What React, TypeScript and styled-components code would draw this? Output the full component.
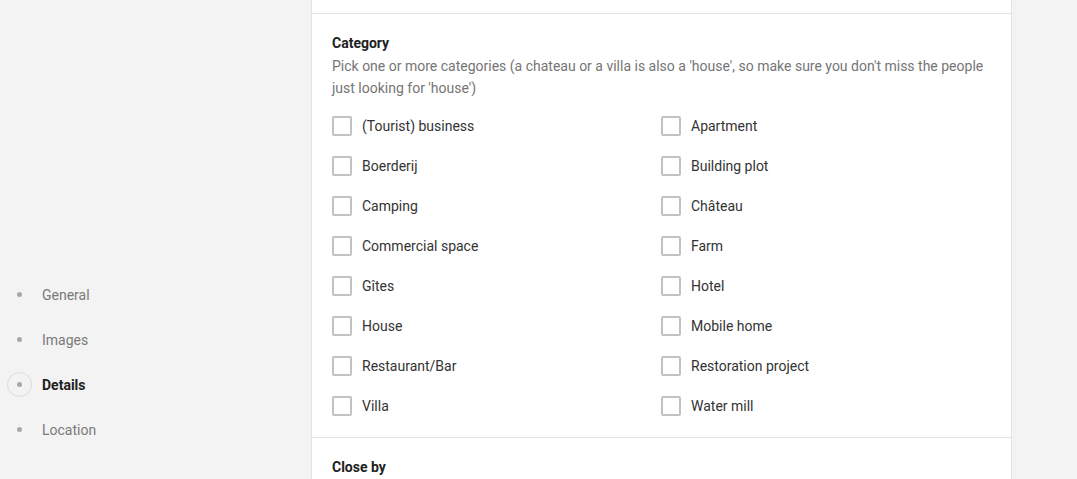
import React from 'react'
import styled, { createGlobalStyle } from 'styled-components'

const GlobalStyle = createGlobalStyle`
  html, body {
    margin: 0;
    padding: 0;
    background: #f3f3f3;
    font-family: Roboto, 'Liberation Sans', sans-serif;
    overflow: hidden;
  }
  * {
    box-sizing: border-box;
  }
`

const steps = [
  { id: 'general', label: 'General' },
  { id: 'images', label: 'Images' },
  { id: 'details', label: 'Details' },
  { id: 'location', label: 'Location' },
]

const categories = [
  '(Tourist) business',
  'Apartment',
  'Boerderij',
  'Building plot',
  'Camping',
  'Château',
  'Commercial space',
  'Farm',
  'Gîtes',
  'Hotel',
  'House',
  'Mobile home',
  'Restaurant/Bar',
  'Restoration project',
  'Villa',
  'Water mill',
]

const App = () => {
  const activeStep = 'details'

  return (
    <>
      <GlobalStyle />
      <Page>
        <Sidebar>
          {steps.map((s) => (
            <StepItem key={s.id} active={s.id === activeStep}>
              <StepMarker active={s.id === activeStep}>
                <Dot />
              </StepMarker>
              {s.label}
            </StepItem>
          ))}
        </Sidebar>

        <Card>
          <CutSection />
          <Section>
            <Title>Category</Title>
            <Description>
              Pick one or more categories (a chateau or a villa is also a 'house', so make sure you
              don't miss the people just looking for 'house')
            </Description>
            <CheckGrid>
              {categories.map((c) => (
                <CheckRow key={c}>
                  <input type="checkbox" />
                  <Box />
                  <span>{c}</span>
                </CheckRow>
              ))}
            </CheckGrid>
          </Section>
          <Section>
            <Title>Close by</Title>
          </Section>
        </Card>
      </Page>
    </>
  )
}

const Page = styled.div`
  display: flex;
  align-items: flex-start;
  height: 479px;
`

const Sidebar = styled.nav`
  width: 311px;
  flex-shrink: 0;
  padding-top: 272px;
  display: flex;
  flex-direction: column;
`

const StepItem = styled.div<{ active?: boolean }>`
  display: flex;
  align-items: center;
  height: 45px;
  padding-left: 7px;
  font-size: 14px;
  color: ${(p) => (p.active ? '#212121' : '#7a7a7a')};
  font-weight: ${(p) => (p.active ? 700 : 400)};
`

const StepMarker = styled.span<{ active?: boolean }>`
  width: 25px;
  height: 25px;
  margin-right: 10px;
  border-radius: 50%;
  display: flex;
  align-items: center;
  justify-content: center;
  border: 1px solid ${(p) => (p.active ? '#dcdcdc' : 'transparent')};
`

const Dot = styled.span`
  width: 5px;
  height: 5px;
  border-radius: 50%;
  background: #a8a8a8;
`

const Card = styled.main`
  width: 701px;
  background: #fff;
  border-left: 1px solid #e4e4e4;
  border-right: 1px solid #e4e4e4;
  min-height: 100%;
`

const CutSection = styled.div`
  height: 13px;
`

const Section = styled.section`
  border-top: 1px solid #e2e2e2;
  padding: 19px 20px 11px;
`

const Title = styled.h3`
  margin: 0;
  font-size: 14px;
  line-height: 20px;
  font-weight: 700;
  color: #212121;
`

const Description = styled.p`
  margin: 2px 0 0;
  font-size: 14px;
  line-height: 22px;
  color: #757575;
`

const CheckGrid = styled.div`
  display: grid;
  grid-template-columns: 329px 1fr;
  margin-top: 7px;
`

const CheckRow = styled.label`
  display: flex;
  align-items: center;
  height: 40px;
  font-size: 14px;
  color: #333;
  cursor: pointer;

  input {
    display: none;
  }
`

const Box = styled.span`
  width: 20px;
  height: 20px;
  border: 2px solid #c2c2c2;
  border-radius: 2px;
  margin-right: 10px;
  flex-shrink: 0;
`

export default App
